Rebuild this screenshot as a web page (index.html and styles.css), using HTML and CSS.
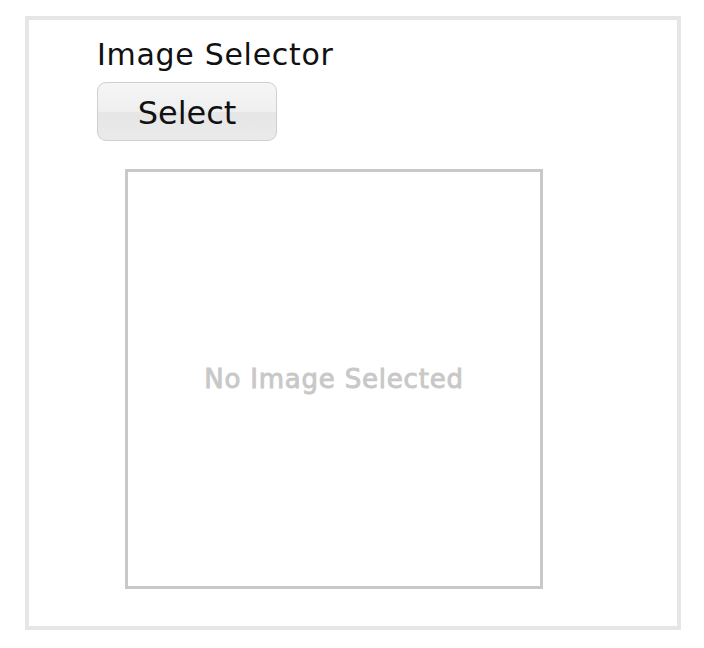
FILE: index.html
```html
<!DOCTYPE html>
<html>
<head>
<meta charset="utf-8">
<link rel="stylesheet" href="styles.css">
</head>
<body>
<div class="frame">
  <div class="title">Image Selector</div>
  <button class="select-btn" type="button">Select</button>
  <div class="preview">
    <span class="empty">No Image Selected</span>
  </div>
</div>
</body>
</html>
```
FILE: styles.css
```css
html, body {
  margin: 0;
  padding: 0;
  background: #ffffff;
}
body {
  font-family: "DejaVu Sans", Verdana, sans-serif;
  color: #111;
}
.frame {
  box-sizing: border-box;
  width: 656px;
  height: 614px;
  margin: 16px 0 0 25px;
  border: 4px solid #e6e6e6;
  padding: 17px 0 0 68px;
  display: flex;
  flex-direction: column;
  align-items: flex-start;
}
.title {
  font-size: 30px;
  line-height: 35px;
  letter-spacing: 0.7px;
  color: #111;
}
.select-btn {
  box-sizing: border-box;
  margin-top: 10px;
  width: 180px;
  height: 59px;
  border: 1px solid #cfcfcf;
  border-radius: 9px;
  background: linear-gradient(#f5f5f5, #efefef 50%, #e6e6e6 52%, #eaeaea);
  font-family: "DejaVu Sans", Verdana, sans-serif;
  font-size: 32px;
  color: #111;
  padding: 3px 0 0 0;
  line-height: 40px;
}
.preview {
  box-sizing: border-box;
  margin: 28px 0 0 28px;
  width: 418px;
  height: 420px;
  border: 3px solid #c8c8c8;
  display: flex;
  align-items: center;
  justify-content: center;
}
.empty {
  font-size: 26px;
  font-weight: normal;
  letter-spacing: 0.8px;
  color: #c8c8c8;
  -webkit-text-stroke: 0.9px #c8c8c8;
}
```
